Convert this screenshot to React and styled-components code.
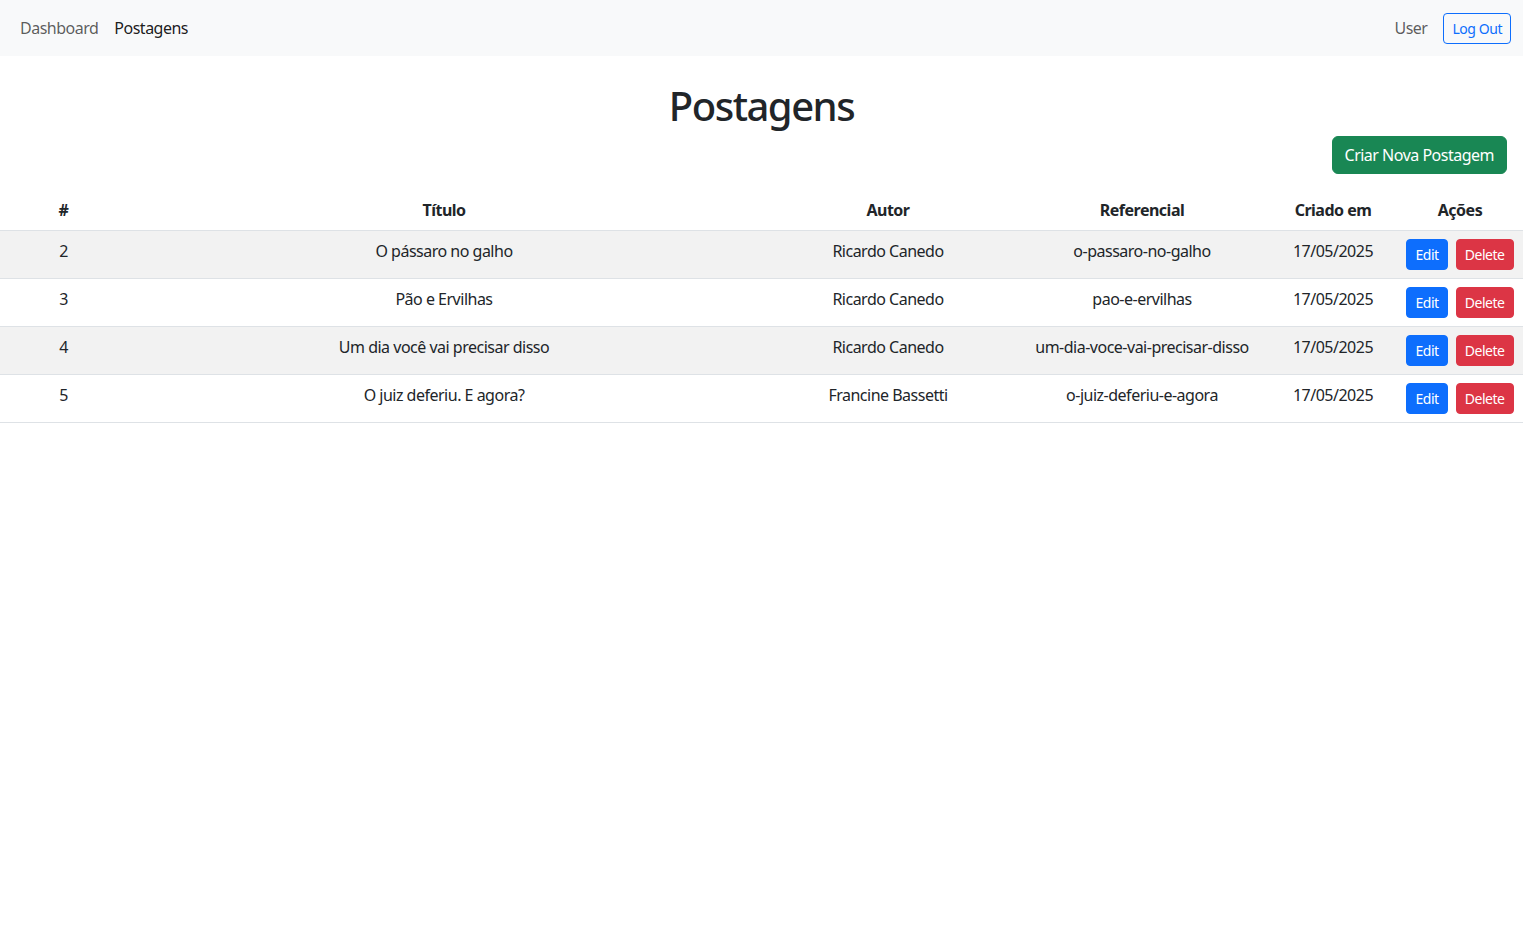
import React from 'react'
import styled, { createGlobalStyle } from 'styled-components'

const GlobalStyle = createGlobalStyle`
  * { box-sizing: border-box; }
  body {
    margin: 0;
    font-family: "Noto Sans", "Liberation Sans", sans-serif;
    font-size: 16px;
    line-height: 1.5;
    letter-spacing: -0.5px;
    color: #212529;
    background: #fff;
  }
`

const Navbar = styled.nav`
  display: flex;
  align-items: center;
  justify-content: space-between;
  height: 56px;
  padding: 0 12px;
  background: #f8f9fa;
`

const NavList = styled.div`
  display: flex;
  align-items: center;
`

const NavLink = styled.a`
  padding: 8px;
  color: ${p => (p.active ? 'rgba(0,0,0,0.9)' : 'rgba(0,0,0,0.65)')};
  text-decoration: none;
  cursor: pointer;
`

const UserName = styled.span`
  color: rgba(0,0,0,0.65);
  margin-right: 16px;
`

const OutlineButton = styled.button`
  font: inherit;
  font-size: 14px;
  line-height: 1.5;
  letter-spacing: -0.45px;
  padding: 4px 8px;
  border-radius: 4px;
  border: 1px solid #0d6efd;
  color: #0d6efd;
  background: transparent;
  cursor: pointer;
`

const Title = styled.h1`
  margin: 26px 0 6px;
  font-size: 40px;
  font-weight: 500;
  line-height: 1.2;
  letter-spacing: -1.5px;
  text-align: center;
`

const Toolbar = styled.div`
  display: flex;
  justify-content: flex-end;
  padding-right: 16px;
  margin-bottom: 16px;
`

const Button = styled.button`
  font: inherit;
  font-size: ${p => (p.small ? '14px' : '16px')};
  letter-spacing: ${p => (p.small ? '-0.45px' : '-0.5px')};
  line-height: 1.5;
  padding: ${p => (p.small ? '4px 8px' : '6px 12px')};
  border-radius: ${p => (p.small ? '4px' : '6px')};
  border: 1px solid ${p => p.color};
  background: ${p => p.color};
  color: #fff;
  cursor: pointer;
  & + & { margin-left: 8px; }
`

const Table = styled.table`
  width: 100%;
  border-collapse: collapse;
  table-layout: fixed;
`

const Th = styled.th`
  padding: 8px;
  font-weight: 700;
  text-align: center;
  vertical-align: bottom;
  border-bottom: 1px solid #dee2e6;
`

const Row = styled.tr`
  background: ${p => (p.striped ? '#f2f2f2' : '#fff')};
`

const Td = styled.td`
  padding: 8px;
  text-align: center;
  vertical-align: top;
  white-space: nowrap;
  border-bottom: 1px solid #dee2e6;
`

const posts = [
  { id: 2, title: 'O pássaro no galho', author: 'Ricardo Canedo', slug: 'o-passaro-no-galho', date: '17/05/2025' },
  { id: 3, title: 'Pão e Ervilhas', author: 'Ricardo Canedo', slug: 'pao-e-ervilhas', date: '17/05/2025' },
  { id: 4, title: 'Um dia você vai precisar disso', author: 'Ricardo Canedo', slug: 'um-dia-voce-vai-precisar-disso', date: '17/05/2025' },
  { id: 5, title: 'O juiz deferiu. E agora?', author: 'Francine Bassetti', slug: 'o-juiz-deferiu-e-agora', date: '17/05/2025' },
]

const columns = [127, 634, 254, 254, 128, 126]

export default function App() {
  return (
    <>
      <GlobalStyle />
      <Navbar>
        <NavList>
          <NavLink>Dashboard</NavLink>
          <NavLink active>Postagens</NavLink>
        </NavList>
        <NavList>
          <UserName>User</UserName>
          <OutlineButton>Log Out</OutlineButton>
        </NavList>
      </Navbar>
      <Title>Postagens</Title>
      <Toolbar>
        <Button color="#198754">Criar Nova Postagem</Button>
      </Toolbar>
      <Table>
        <colgroup>
          {columns.map((w, i) => <col key={i} width={w} />)}
        </colgroup>
        <thead>
          <tr>
            <Th>#</Th>
            <Th>Título</Th>
            <Th>Autor</Th>
            <Th>Referencial</Th>
            <Th>Criado em</Th>
            <Th>Ações</Th>
          </tr>
        </thead>
        <tbody>
          {posts.map((p, i) => (
            <Row key={p.id} striped={i % 2 === 0}>
              <Td>{p.id}</Td>
              <Td>{p.title}</Td>
              <Td>{p.author}</Td>
              <Td>{p.slug}</Td>
              <Td>{p.date}</Td>
              <Td>
                <Button small color="#0d6efd">Edit</Button>
                <Button small color="#dc3545">Delete</Button>
              </Td>
            </Row>
          ))}
        </tbody>
      </Table>
    </>
  )
}
